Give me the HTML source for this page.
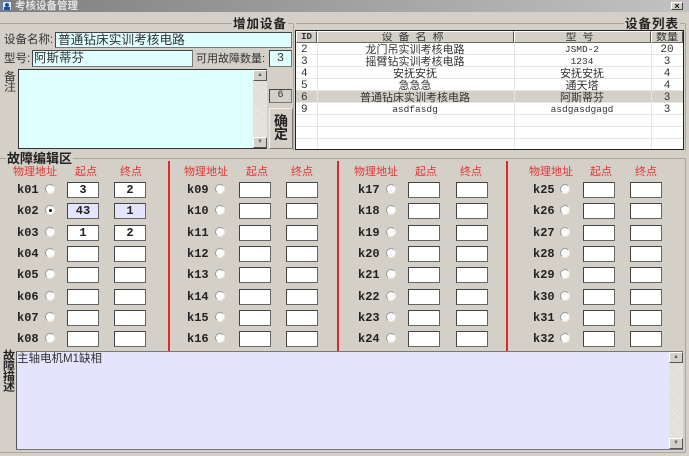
<!DOCTYPE html>
<html><head><meta charset="utf-8"><style>
html,body{margin:0;padding:0}
body{width:689px;height:456px;overflow:hidden;position:relative;background:#d4d0c8;font:11px/14px "Liberation Sans","Noto Sans CJK SC",sans-serif;color:#333}
.a{position:absolute;white-space:nowrap}
.in{position:absolute;box-sizing:border-box;background:#dfffff;border:1px solid #444;border-right-color:#777;border-bottom-color:#777;white-space:nowrap;overflow:hidden}
.ln{position:absolute;background:#aaa69e}
.t{position:absolute;background:#d4d0c8;font-weight:bold;font-size:12.5px;line-height:14px;letter-spacing:1px;color:#222;white-space:nowrap;padding:0 1px}
.sb{position:absolute;width:14px;background:#e6e3dc;background-image:repeating-linear-gradient(45deg,#eeece6 0 1px,#d9d6cf 1px 2px)}
.ar{position:absolute;left:0;width:14px;height:11px;box-sizing:border-box;background:#d4d0c8;border:1px solid;border-color:#fff #555 #555 #fff;color:#666;font-size:6px;line-height:9px;text-align:center}
.c{position:absolute;top:0;left:0}
.row{position:absolute;left:0;width:689px;height:18px}
.row b{position:absolute;top:1px;font:bold 12px/14px "Liberation Mono",monospace;color:#222}
.row i{position:absolute;top:2px;border-radius:50%;background:#fbfbfb;border:1px solid;border-color:#999 #e8e8e8 #e8e8e8 #999;box-sizing:content-box;width:8px;height:8px}
.row u,.row s{position:absolute;top:0;width:32px;height:16px;box-sizing:border-box;background:#fff;border:1px solid #444;border-right-color:#666;border-bottom-color:#666;text-decoration:none;text-align:center;font:bold 12px/14px "Liberation Mono",monospace;color:#222}
.c1 b{left:17px}.c1 i{left:45px}.c1 u{left:67px}.c1 s{left:114px}
.c2 b{left:187px}.c2 i{left:215px}.c2 u{left:239px}.c2 s{left:286px}
.c3 b{left:358px}.c3 i{left:386px}.c3 u{left:408px}.c3 s{left:456px}
.c4 b{left:533px}.c4 i{left:560px}.c4 u{left:583px}.c4 s{left:630px}
.row u.on,.row s.on{background:#e4e4ff}
.row i.ck::after{content:"";position:absolute;left:3px;top:3px;width:3px;height:3px;border-radius:50%;background:#111}
.hd{position:absolute;top:165px;color:#e33434;font-size:11px;line-height:14px;white-space:nowrap}
.red{position:absolute;top:161px;width:2px;height:190px;background:#e02828}
.tb{position:absolute;left:296px;width:387px;height:12px;font-size:11px;line-height:12px;background:#fff;border-bottom:1px solid #e8e6e0;box-sizing:border-box;color:#333}
.tb span{position:absolute;top:0;text-align:center;white-space:nowrap}
.tb .i{left:5px;text-align:left;font:11px/12px "Liberation Mono",monospace}
.tb .n{left:21px;width:196px}
.tb .m{left:218px;width:136px}
.tb .q{left:355px;width:32px;font:11px/12px "Liberation Mono",monospace}
.tb .mono{font:9.5px/12px "Liberation Mono",monospace}
.th{position:absolute;top:31px;height:12px;box-sizing:border-box;background:#d4d0c8;border:1px solid;border-color:#fff #555 #666 #fff;text-align:center;font-size:11px;line-height:10px;color:#333;white-space:nowrap;overflow:hidden}
.vl{position:absolute;top:43px;height:106px;width:1px;background:#e8e6e0}
.v{position:absolute;white-space:normal;transform-origin:0 0;transform:scaleY(.88)}
</style></head><body>

<!-- title bar -->
<div class="a" style="left:0;top:0;width:689px;height:12px;background:linear-gradient(90deg,#7f7f7f,#c2c2c2)"></div>
<div class="a" style="left:2px;top:1px;width:10px;height:10px;background:#dfe8f4;border:1px solid #5a7ab0;box-sizing:border-box"><div style="position:absolute;left:2px;top:1px;width:4px;height:4px;background:#1c4f9c;border-radius:50%"></div><div style="position:absolute;left:1px;top:5px;width:6px;height:3px;background:#1c4f9c"></div></div>
<div class="a" style="left:15px;top:0;font-size:10.5px;line-height:12px;color:#e2e2e2;font-weight:bold">考核设备管理</div>
<div class="a" style="left:671px;top:2px;width:12px;height:8px;box-sizing:border-box;background:#d4d0c8;border:1px solid;border-color:#fff #444 #444 #fff;font:bold 9px/6px 'Liberation Sans',sans-serif;text-align:center;color:#111">×</div>

<!-- group lines -->
<div class="ln" style="left:0;top:23px;width:293px;height:1px"></div>
<div class="ln" style="left:293px;top:23px;width:1px;height:128px"></div>
<div class="ln" style="left:296px;top:23px;width:389px;height:1px"></div>
<div class="ln" style="left:685px;top:23px;width:1px;height:128px"></div>
<div class="t" style="left:232px;top:17px">增加设备</div>
<div class="t" style="left:624px;top:17px">设备列表</div>

<!-- left form -->
<div class="a" style="left:4px;top:33px;font-size:11.5px">设备名称:</div>
<div class="in" style="left:55px;top:32px;width:237px;height:16px;font-size:12.7px;line-height:14px;padding-left:2px">普通钻床实训考核电路</div>
<div class="a" style="left:4px;top:52px;font-size:11.5px">型号:</div>
<div class="in" style="left:32px;top:50px;width:161px;height:17px;font-size:12.5px;line-height:14px;padding-left:1px">阿斯蒂芬</div>
<div class="a" style="left:196px;top:52px">可用故障数量:</div>
<div class="in" style="left:269px;top:50px;width:23px;height:17px;text-align:center;font:12px/15px 'Liberation Mono',monospace">3</div>
<div class="v" style="left:4px;top:71px;width:12px;font-size:12px;line-height:12px">备注</div>
<div class="in" style="left:18px;top:69px;width:249px;height:80px;border-color:#333 #555 #333 #333"></div>
<div class="sb" style="left:253px;top:70px;height:78px"><div class="ar" style="top:0">▲</div><div class="ar" style="bottom:0">▼</div></div>
<div class="in" style="left:269px;top:89px;width:23px;height:14px;background:#d4d0c8;text-align:center;font:10px/12px 'Liberation Mono',monospace">6</div>
<div class="a" style="left:269px;top:108px;width:24px;height:41px;box-sizing:border-box;background:#d4d0c8;border:1px solid;border-color:#eee #777 #777 #eee;font-weight:bold;font-size:14px;line-height:13px;text-align:center;white-space:normal;padding-top:6px;color:#222">确定</div>

<!-- table -->
<div class="a" style="left:295px;top:30px;width:389px;height:120px;box-sizing:border-box;border:1px solid #222;background:#fff"></div>
<div class="th" style="left:296px;width:21px;font:bold 9px/10px 'Liberation Mono',monospace">ID</div>
<div class="th" style="left:317px;width:197px;letter-spacing:6px">设备名称</div>
<div class="th" style="left:514px;width:137px;letter-spacing:6px">型号</div>
<div class="th" style="left:651px;width:32px">数量</div>
<div class="tb" style="top:43px;padding-top:0"><span class="i" style="top:1px">2</span><span class="n" style="top:1px">龙门吊实训考核电路</span><span class="m mono" style="top:1px">JSMD-2</span><span class="q" style="top:1px">20</span></div>
<div class="tb" style="top:55px"><span class="i" style="top:1px">3</span><span class="n" style="top:1px">摇臂钻实训考核电路</span><span class="m mono" style="top:1px">1234</span><span class="q" style="top:1px">3</span></div>
<div class="tb" style="top:67px"><span class="i" style="top:1px">4</span><span class="n" style="top:1px">安抚安抚</span><span class="m" style="top:1px">安抚安抚</span><span class="q" style="top:1px">4</span></div>
<div class="tb" style="top:79px"><span class="i" style="top:1px">5</span><span class="n" style="top:1px">急急急</span><span class="m" style="top:1px">通天塔</span><span class="q" style="top:1px">4</span></div>
<div class="tb" style="top:91px;background:#d4d0c8"><span class="i" style="top:1px">6</span><span class="n" style="top:1px">普通钻床实训考核电路</span><span class="m" style="top:1px">阿斯蒂芬</span><span class="q" style="top:1px">3</span></div>
<div class="tb" style="top:103px"><span class="i" style="top:1px">9</span><span class="n mono" style="top:1px">asdfasdg</span><span class="m mono" style="top:1px">asdgasdgagd</span><span class="q" style="top:1px">3</span></div>
<div class="tb" style="top:115px"></div>
<div class="tb" style="top:127px"></div>
<div class="tb" style="top:139px;height:10px;border:0"></div>
<div class="vl" style="left:317px"></div>
<div class="vl" style="left:514px"></div>
<div class="vl" style="left:651px"></div>

<!-- fault editor -->
<div class="ln" style="left:0;top:158px;width:686px;height:1px"></div>
<div class="ln" style="left:685px;top:158px;width:1px;height:294px"></div>
<div class="ln" style="left:0;top:452px;width:686px;height:1px"></div>
<div class="t" style="left:6px;top:152px;font-size:13px;letter-spacing:0">故障编辑区</div>

<div class="hd" style="left:13px">物理地址</div><div class="hd" style="left:75px">起点</div><div class="hd" style="left:120px">终点</div>
<div class="hd" style="left:184px">物理地址</div><div class="hd" style="left:246px">起点</div><div class="hd" style="left:291px">终点</div>
<div class="hd" style="left:354px">物理地址</div><div class="hd" style="left:415px">起点</div><div class="hd" style="left:460px">终点</div>
<div class="hd" style="left:529px">物理地址</div><div class="hd" style="left:590px">起点</div><div class="hd" style="left:635px">终点</div>
<div class="red" style="left:168px"></div>
<div class="red" style="left:337px"></div>
<div class="red" style="left:506px"></div>

<div class="c c1">
<div class="row" style="top:182px"><b>k01</b><i></i><u>3</u><s>2</s></div>
<div class="row" style="top:203px"><b>k02</b><i class="ck"></i><u class="on">43</u><s class="on">1</s></div>
<div class="row" style="top:225px"><b>k03</b><i></i><u>1</u><s>2</s></div>
<div class="row" style="top:246px"><b>k04</b><i></i><u></u><s></s></div>
<div class="row" style="top:267px"><b>k05</b><i></i><u></u><s></s></div>
<div class="row" style="top:289px"><b>k06</b><i></i><u></u><s></s></div>
<div class="row" style="top:310px"><b>k07</b><i></i><u></u><s></s></div>
<div class="row" style="top:331px"><b>k08</b><i></i><u></u><s></s></div>
</div>
<div class="c c2">
<div class="row" style="top:182px"><b>k09</b><i></i><u></u><s></s></div>
<div class="row" style="top:203px"><b>k10</b><i></i><u></u><s></s></div>
<div class="row" style="top:225px"><b>k11</b><i></i><u></u><s></s></div>
<div class="row" style="top:246px"><b>k12</b><i></i><u></u><s></s></div>
<div class="row" style="top:267px"><b>k13</b><i></i><u></u><s></s></div>
<div class="row" style="top:289px"><b>k14</b><i></i><u></u><s></s></div>
<div class="row" style="top:310px"><b>k15</b><i></i><u></u><s></s></div>
<div class="row" style="top:331px"><b>k16</b><i></i><u></u><s></s></div>
</div>
<div class="c c3">
<div class="row" style="top:182px"><b>k17</b><i></i><u></u><s></s></div>
<div class="row" style="top:203px"><b>k18</b><i></i><u></u><s></s></div>
<div class="row" style="top:225px"><b>k19</b><i></i><u></u><s></s></div>
<div class="row" style="top:246px"><b>k20</b><i></i><u></u><s></s></div>
<div class="row" style="top:267px"><b>k21</b><i></i><u></u><s></s></div>
<div class="row" style="top:289px"><b>k22</b><i></i><u></u><s></s></div>
<div class="row" style="top:310px"><b>k23</b><i></i><u></u><s></s></div>
<div class="row" style="top:331px"><b>k24</b><i></i><u></u><s></s></div>
</div>
<div class="c c4">
<div class="row" style="top:182px"><b>k25</b><i></i><u></u><s></s></div>
<div class="row" style="top:203px"><b>k26</b><i></i><u></u><s></s></div>
<div class="row" style="top:225px"><b>k27</b><i></i><u></u><s></s></div>
<div class="row" style="top:246px"><b>k28</b><i></i><u></u><s></s></div>
<div class="row" style="top:267px"><b>k29</b><i></i><u></u><s></s></div>
<div class="row" style="top:289px"><b>k30</b><i></i><u></u><s></s></div>
<div class="row" style="top:310px"><b>k31</b><i></i><u></u><s></s></div>
<div class="row" style="top:331px"><b>k32</b><i></i><u></u><s></s></div>
</div>

<!-- description -->
<div class="v" style="left:3px;top:350px;width:13px;font-weight:bold;font-size:12px;line-height:12px;color:#222">故障描述</div>
<div class="in" style="left:16px;top:351px;width:667px;height:99px;background:#e4e4ff;border-color:#777 #555 #777 #555;font-size:11.5px;line-height:13px;padding:1px 0 0 0">主轴电机M1缺相</div>
<div class="sb" style="left:669px;top:352px;height:97px"><div class="ar" style="top:0">▲</div><div class="ar" style="bottom:0">▼</div></div>

</body></html>
